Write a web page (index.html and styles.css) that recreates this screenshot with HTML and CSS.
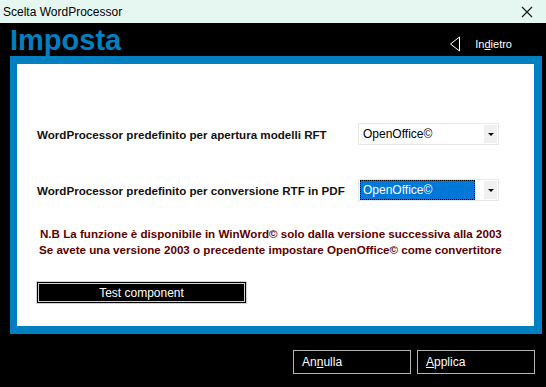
FILE: index.html
```html
<!DOCTYPE html>
<html lang="it">
<head>
    <meta charset="UTF-8">
    <title>Scelta WordProcessor</title>
    <link rel="stylesheet" href="styles.css">
</head>
<body>

    <div class="titlebar">
        <span class="titlebar-text">Scelta WordProcessor</span>
        <svg class="close-icon" width="12" height="12" viewBox="0 0 12 12">
            <path d="M1 1 L11 11 M11 1 L1 11" stroke="#1a1a1a" stroke-width="1.2" fill="none"/>
        </svg>
    </div>

    <div class="header">
        <h1 class="page-title">Imposta</h1>
        <div class="back">
            <svg class="back-icon" width="12" height="16" viewBox="0 0 12 16">
                <path d="M10.5 1 L1.5 8 L10.5 15 Z" stroke="#fff" stroke-width="1" fill="none"/>
            </svg>
            <span class="back-text">In<u>d</u>ietro</span>
        </div>
    </div>

    <div class="panel">
        <div class="panel-inner">
            <div class="row">
                <span class="row-label">WordProcessor predefinito per apertura modelli RFT</span>
                <div class="combo">
                    <span class="combo-value">OpenOffice©</span>
                    <span class="combo-arrow"></span>
                </div>
            </div>
            <div class="row row-second">
                <span class="row-label">WordProcessor predefinito per conversione RTF in PDF</span>
                <div class="combo">
                    <span class="combo-value selected">OpenOffice©</span>
                    <span class="combo-arrow"></span>
                </div>
            </div>
            <div class="note">
                <p class="note-line first">N.B La funzione è disponibile in WinWord© solo dalla versione successiva alla 2003</p>
                <p class="note-line">Se avete una versione 2003 o precedente impostare OpenOffice© come convertitore</p>
            </div>
            <button class="test-button">Test component</button>
        </div>
    </div>

    <div class="footer">
        <button class="footer-button">An<u>n</u>ulla</button>
        <button class="footer-button"><u>A</u>pplica</button>
    </div>

</body>
</html>
```

FILE: styles.css
```css
body {
    margin: 0;
    width: 546px;
    height: 387px;
    background-color: #000;
    font-family: 'Liberation Sans', Arial, sans-serif;
    overflow: hidden;
}

.titlebar {
    height: 23px;
    display: flex;
    align-items: center;
    justify-content: space-between;
    padding: 0 13px 0 3px;
    background-color: #e6f7f1;
}

.titlebar-text {
    font-size: 12px;
    color: #000;
}

.close-icon {
    display: block;
}

.header {
    height: 33px;
    display: flex;
    justify-content: space-between;
    align-items: flex-start;
    padding: 0 34px 0 10px;
}

.page-title {
    margin: 0;
    margin-top: 1px;
    font-size: 29px;
    line-height: 33px;
    font-weight: bold;
    color: #0080c0;
}

.back {
    display: flex;
    align-items: center;
    gap: 14px;
    margin-top: 13px;
}

.back-icon {
    display: block;
}

.back-text {
    font-size: 11px;
    color: #fff;
}

.panel {
    margin-left: 10px;
    width: 532px;
    box-sizing: border-box;
    border-style: solid;
    border-color: #0080c0;
    border-width: 8px 8px 8px 7px;
}

.panel-inner {
    height: 262px;
    box-sizing: border-box;
    background-color: #fff;
    padding: 59px 0 0 20px;
}

.row {
    display: flex;
    align-items: center;
    height: 22px;
}

.row-second {
    margin-top: 34px;
}

.row-label {
    width: 321px;
    font-size: 11.6px;
    font-weight: bold;
    color: #111;
}

.combo {
    width: 141px;
    height: 22px;
    box-sizing: border-box;
    border: 1px solid #e8e8e8;
    display: flex;
    align-items: center;
    padding: 1px 1px 1px 1px;
    background-color: #fff;
}

.combo-value {
    flex: 1;
    height: 18px;
    line-height: 18px;
    padding-left: 3px;
    font-size: 12px;
    color: #000;
}

.combo-value.selected {
    flex: 0 0 auto;
    width: 115px;
    height: 20px;
    line-height: 18px;
    box-sizing: border-box;
    padding-left: 2px;
    margin-right: 6px;
    background-color: #0078d7;
    color: #fff;
    border: 1px dotted #f0a030;
    outline: 1px dotted #000;
    outline-offset: -1px;
}

.combo-value.selected + .combo-arrow {
    margin-left: auto;
}

.combo-arrow {
    width: 13px;
    height: 18px;
    background-color: #f0f0f0;
    position: relative;
}

.combo-arrow::after {
    content: '';
    position: absolute;
    left: 4px;
    top: 8px;
    border-left: 3px solid transparent;
    border-right: 3px solid transparent;
    border-top: 3px solid #000;
}

.note {
    margin-top: 25px;
}

.note-line {
    margin: 0;
    padding-left: 2px;
    font-size: 11.6px;
    line-height: 16px;
    font-weight: bold;
    color: #5c0000;
}

.note-line.first {
    padding-left: 3px;
}

.test-button {
    display: block;
    margin-top: 23px;
    margin-left: -1px;
    width: 211px;
    height: 23px;
    border: 3px double #d0d0d0;
    background-color: #000;
    color: #fff;
    font-family: 'Liberation Sans', Arial, sans-serif;
    font-size: 12px;
    padding: 0;
}

.footer {
    display: flex;
    justify-content: flex-end;
    gap: 6px;
    padding: 16px 11px 0 0;
}

.footer-button {
    width: 118px;
    height: 24px;
    box-sizing: border-box;
    border: 1px solid #b4b4b4;
    background-color: #000;
    color: #fff;
    font-family: 'Liberation Sans', Arial, sans-serif;
    font-size: 12px;
    text-align: left;
    padding: 0 0 0 8px;
}
```
